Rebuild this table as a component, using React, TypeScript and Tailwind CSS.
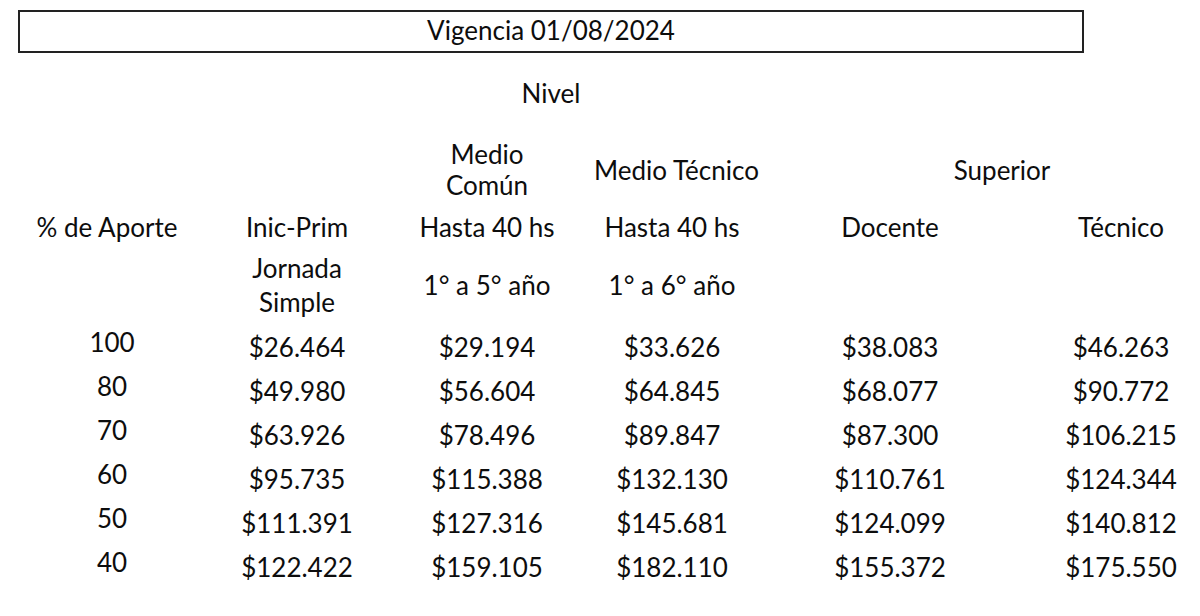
import React from "react";

const rows: [string, string[]][] = [
  ["100", ["$26.464", "$29.194", "$33.626", "$38.083", "$46.263"]],
  ["80", ["$49.980", "$56.604", "$64.845", "$68.077", "$90.772"]],
  ["70", ["$63.926", "$78.496", "$89.847", "$87.300", "$106.215"]],
  ["60", ["$95.735", "$115.388", "$132.130", "$110.761", "$124.344"]],
  ["50", ["$111.391", "$127.316", "$145.681", "$124.099", "$140.812"]],
  ["40", ["$122.422", "$159.105", "$182.110", "$155.372", "$175.550"]],
];

const cols = "grid grid-cols-[214px_166px_214px_156px_280px_170px] text-center whitespace-nowrap leading-[32px]";

export default function App() {
  return (
    <div
      className="w-[1200px] h-[616px] bg-white text-[#0d0d0d] text-[26px] overflow-hidden"
      style={{ fontFamily: "Lato, 'Open Sans', sans-serif" }}
    >
      <div className="pt-[10px] pl-[18px]">
        <div className="w-[1066px] h-[43px] border-2 border-[#222] flex items-center justify-center pb-[2px]">
          Vigencia 01/08/2024
        </div>
      </div>
      <div className="h-[82px] w-[1102px] flex items-center justify-center pb-[2px]">Nivel</div>
      <div className={`${cols} h-[70px] items-center`}>
        <div />
        <div />
        <div className="leading-[31px]">
          Medio
          <br />
          Común
        </div>
        <div>Medio Técnico</div>
        <div className="col-span-2 pl-[54px]">Superior</div>
      </div>
      <div className={`${cols} h-[44px] items-center`}>
        <div>% de Aporte</div>
        <div>Inic-Prim</div>
        <div>Hasta 40 hs</div>
        <div>Hasta 40 hs</div>
        <div>Docente</div>
        <div className="pl-[12px]">Técnico</div>
      </div>
      <div className={`${cols} h-[72px] items-center`}>
        <div />
        <div className="leading-[34px]">
          Jornada
          <br />
          Simple
        </div>
        <div>1° a 5° año</div>
        <div>1° a 6° año</div>
        <div />
        <div />
      </div>
      <div className="pt-[4px]">
        {rows.map(([p, vals]) => (
          <div key={p} className={`${cols} h-[44px] items-center`}>
            <div className="pb-[10px] pl-[10px]">{p}</div>
            {vals.map((v, i) => (
              <div key={i} className={i === 4 ? "pl-[12px]" : ""}>
                {v}
              </div>
            ))}
          </div>
        ))}
      </div>
    </div>
  );
}
